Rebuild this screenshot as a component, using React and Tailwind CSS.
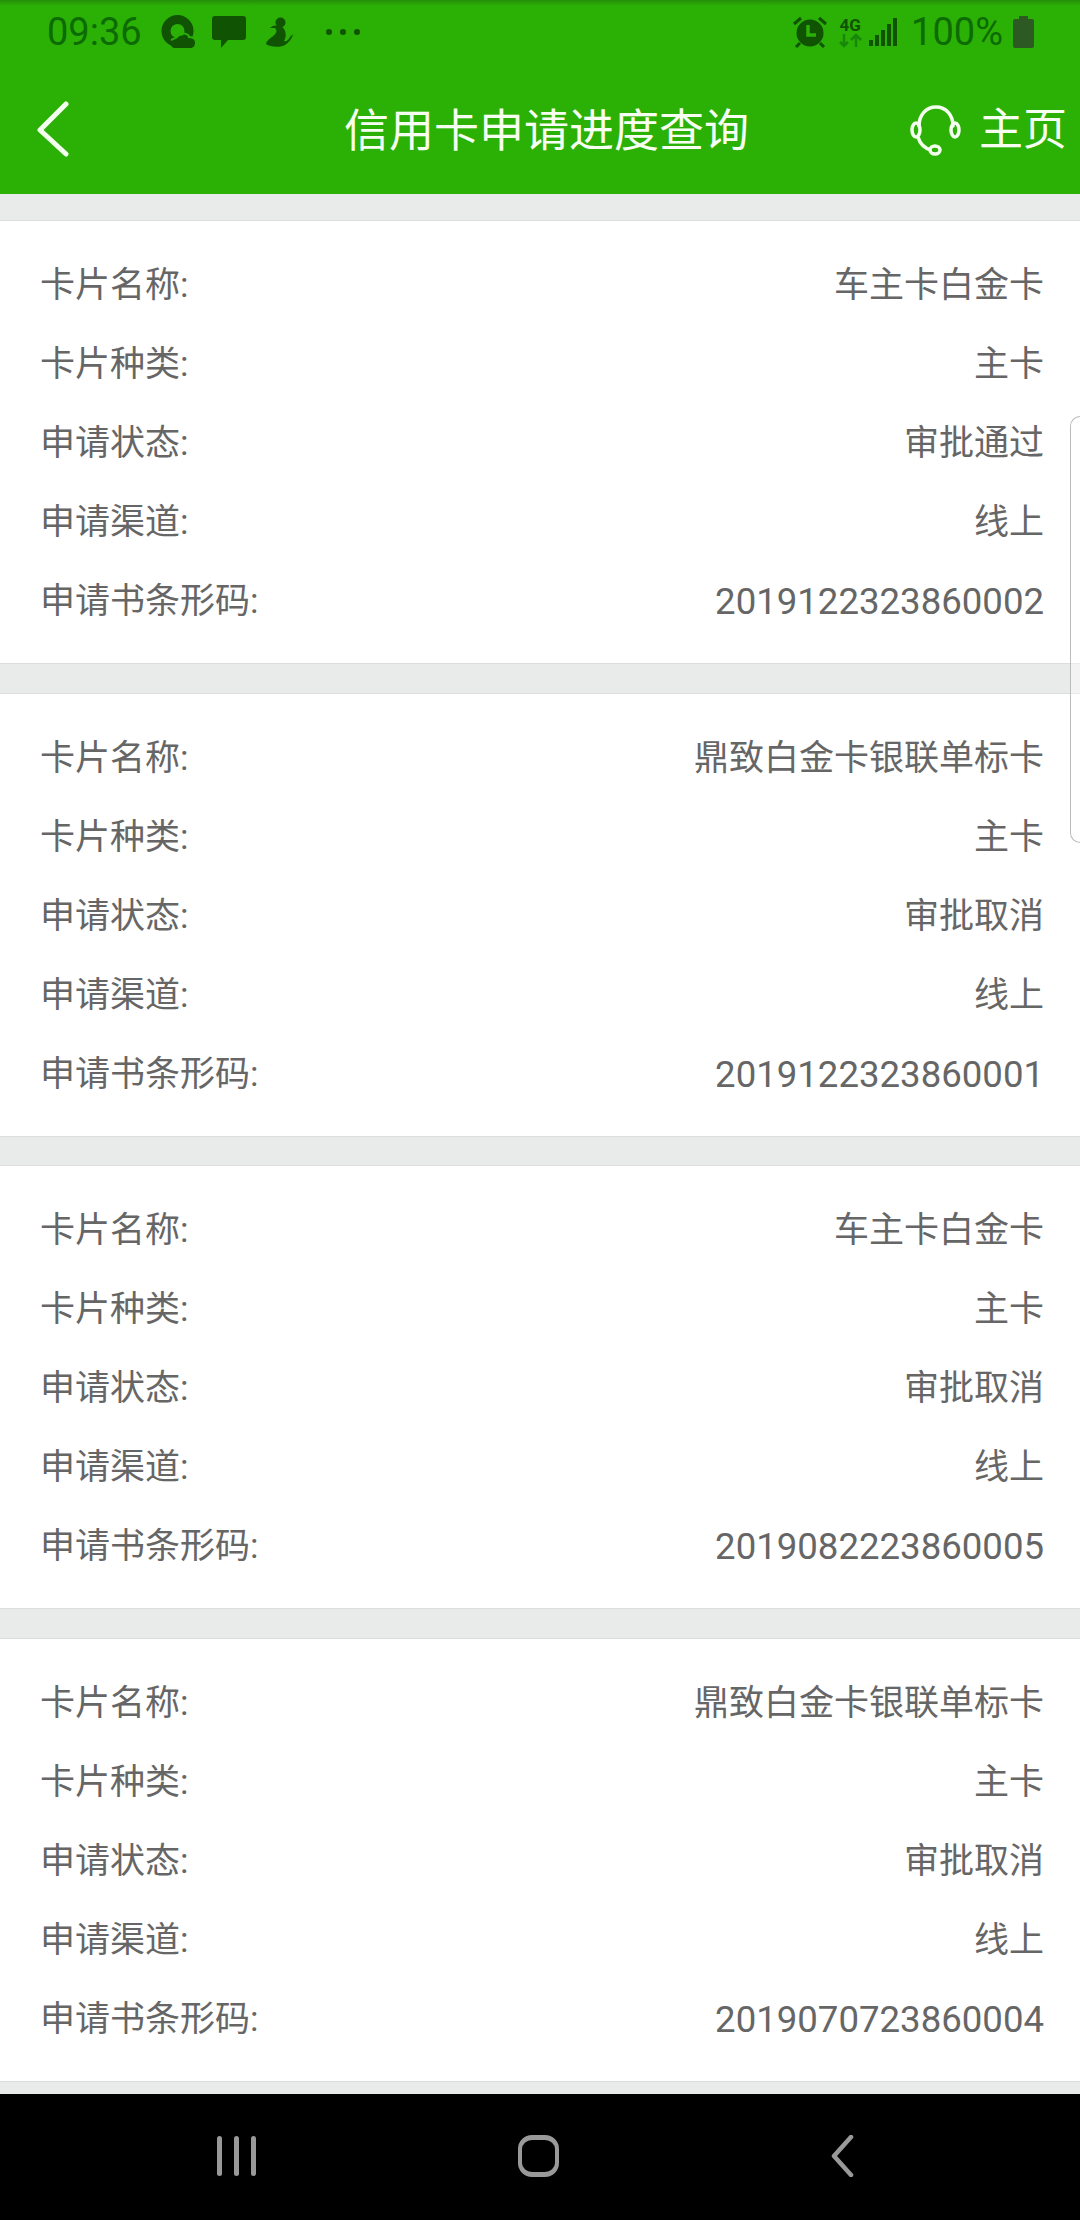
const FONT = "font-['Roboto','Noto_Sans_CJK_SC',sans-serif]";
const DARK = "#0f5303";

const cards = [
  { name: "车主卡白金卡", status: "审批通过", code: "2019122323860002" },
  { name: "鼎致白金卡银联单标卡", status: "审批取消", code: "2019122323860001" },
  { name: "车主卡白金卡", status: "审批取消", code: "2019082223860005" },
  { name: "鼎致白金卡银联单标卡", status: "审批取消", code: "2019070723860004" },
];

function Row({ label, value, digits }) {
  return (
    <div className="flex h-[79px] items-center justify-between pl-[40px] pr-[36px] text-[35px] text-[#666666]">
      <span>{label}</span>
      <span className={digits ? "text-[36.6px]" : ""}>{value}</span>
    </div>
  );
}

function Card({ c }) {
  return (
    <div className="mb-[28.5px] h-[444px] border-y border-[#dddddd] bg-white pt-[26px]">
      <Row label="卡片名称:" value={c.name} />
      <Row label="卡片种类:" value="主卡" />
      <Row label="申请状态:" value={c.status} />
      <Row label="申请渠道:" value="线上" />
      <Row label="申请书条形码:" value={c.code} digits />
    </div>
  );
}

function StatusLeft() {
  return (
    <div className="flex items-center">
      <span className="ml-[47px] text-[38px] leading-none text-[#0d6b03]">09:36</span>
      <svg className="ml-[19px]" width="35" height="34" viewBox="0 0 35 34">
        <circle cx="16.5" cy="16" r="11.500" fill="none" stroke={DARK} strokeWidth="9" />
        <path d="M14 33c-3 0-4-2-4-4.500s2-4 5-4.500c1-3.500 8-5 11-1.500 5-1 8 1.500 8 5.500 0 3-2 5-5 5z" fill={DARK} />
        <path d="M10 25c3-1 4-2 6-3 2-3 7-5 11-2 1 1 1 2 1 2 2 0 4 0 6 2" fill="none" stroke="#2bb006" strokeWidth="2" />
      </svg>
      <svg className="ml-[16px]" width="34" height="32" viewBox="0 0 34 32">
        <path d="M3 0h28a3 3 0 0 1 3 3v18a3 3 0 0 1-3 3H16l-7 8v-8H3a3 3 0 0 1-3-3V3a3 3 0 0 1 3-3z" fill={DARK} />
      </svg>
      <svg className="ml-[20px]" width="27" height="30" viewBox="0 0 27 30">
        <circle cx="14.500" cy="5.500" r="5" fill={DARK} />
        <path d="M11 9c-2-1-5 0-7 2l5 0c3 3 1 6-3 9-3 2-6 5-6 7 4 3 14 4 19 1 4-3 7-6 8-11l-3 3c-1 3-4 5-6 4 3-5 2-12-3-15z" fill={DARK} />
      </svg>
      <div className="ml-[33px] flex gap-[8px]">
        <span className="size-[6px] rounded-full bg-[#0f5303]" />
        <span className="size-[6px] rounded-full bg-[#0f5303]" />
        <span className="size-[6px] rounded-full bg-[#0f5303]" />
      </div>
    </div>
  );
}

function StatusRight() {
  return (
    <div className="flex items-center">
      <svg width="36" height="32" viewBox="0 0 36 32">
        <circle cx="18" cy="17" r="13.500" fill={DARK} />
        <path d="M16 9v10h8" fill="none" stroke="#2bb006" strokeWidth="3.500" />
        <path d="M2 8l7-6M34 8l-7-6M8 27l-4 4M28 27l4 4" stroke={DARK} strokeWidth="3" />
      </svg>
      <div className="ml-[10px] flex w-[24px] flex-col items-center">
        <span className="text-[17px] leading-[16px] font-bold text-[#0f5303]">4G</span>
        <svg width="24" height="15" viewBox="0 0 24 15">
          <path d="M6 1v12M2 9l4 4 4-4" fill="none" stroke="#18870a" strokeWidth="2.500" />
          <path d="M18 14V2M13 7l5-5 5 5" fill="none" stroke="#18870a" strokeWidth="2.500" />
        </svg>
      </div>
      <svg className="ml-[7px]" width="28" height="30" viewBox="0 0 28 30">
        <rect x="0" y="23" width="4" height="6" fill={DARK} />
        <rect x="6" y="18" width="4" height="11" fill={DARK} />
        <rect x="12" y="13" width="4" height="16" fill={DARK} />
        <rect x="18" y="7" width="4" height="22" fill={DARK} />
        <rect x="24" y="1" width="4" height="28" fill={DARK} />
      </svg>
      <span className="ml-[14px] text-[38px] leading-none text-[#0d6b03]">100%</span>
      <svg className="ml-[10px]" width="21" height="32" viewBox="0 0 21 32">
        <path d="M6 0h9v3h4a2 2 0 0 1 2 2v25a2 2 0 0 1-2 2H2a2 2 0 0 1-2-2V5a2 2 0 0 1 2-2h4z" fill="#2d5a22" />
      </svg>
    </div>
  );
}

export default function App() {
  return (
    <div className={`${FONT} relative flex h-[2220px] w-[1080px] flex-col overflow-hidden bg-[#e9ebea]`}>
      <header className="h-[194px] shrink-0 bg-[#2bb006] bg-gradient-to-b from-[#258f08] from-0% to-[#2bb006] to-[3%]">
        <div className="flex h-[64px] items-center justify-between pr-[46px]">
          <StatusLeft />
          <StatusRight />
        </div>
        <div className="relative flex h-[130px] items-center justify-between pl-[36px] pr-[13px]">
          <svg width="34" height="56" viewBox="0 0 34 56" className="mb-[1px]">
            <path d="M30 3L4 29l26 24" fill="none" stroke="#f4fff0" strokeWidth="5" strokeLinecap="round" strokeLinejoin="round" />
          </svg>
          <div className="absolute inset-x-0 top-[28px] pl-[13px] text-center text-[45px] leading-[80px] text-[#f6fff2]">信用卡申请进度查询</div>
          <div className="flex items-center pt-[2px] text-[44px] text-[#f6fff2]">
            <svg width="52" height="52" viewBox="0 0 52 52">
              <path d="M9 22C9 11 16 3 26 3s17 8 17 19" fill="none" stroke="#f4fff0" strokeWidth="3.500" strokeLinecap="round" />
              <ellipse cx="6" cy="26" rx="4" ry="7" fill="none" stroke="#f4fff0" strokeWidth="3.500" />
              <ellipse cx="45" cy="26" rx="4" ry="7" fill="none" stroke="#f4fff0" strokeWidth="3.500" />
              <path d="M8 33c2 7 6 11 13 13" fill="none" stroke="#f4fff0" strokeWidth="3.500" />
              <ellipse cx="25" cy="46" rx="5" ry="4" fill="none" stroke="#f4fff0" strokeWidth="3.500" />
            </svg>
            <span className="ml-[17px]">主页</span>
          </div>
        </div>
      </header>
      <main className="flex-1 overflow-hidden pt-[26px]">
        {cards.map((c, i) => (
          <Card key={i} c={c} />
        ))}
      </main>
      <nav className="flex h-[126px] shrink-0 items-center bg-black pb-[3px] pl-[217px]">
        <div className="flex gap-[12px]">
          <span className="h-[40px] w-[5px] rounded-full bg-[#999999]" />
          <span className="h-[40px] w-[5px] rounded-full bg-[#999999]" />
          <span className="h-[40px] w-[5px] rounded-full bg-[#999999]" />
        </div>
        <div className="ml-[262px] h-[42px] w-[41px] rounded-[14px] border-x-[4px] border-y-[5px] border-[#999999]" />
        <svg className="ml-[269px]" width="26" height="42" viewBox="0 0 26 42">
          <path d="M23 2L6 21l17 19" fill="none" stroke="#999999" strokeWidth="4.500" strokeLinecap="round" strokeLinejoin="round" />
        </svg>
      </nav>
      <div className="absolute right-0 top-[416px] h-[427px] w-[10px] rounded-l-[14px] border-y border-l border-[#bbbbbb] bg-white/40" />
    </div>
  );
}
